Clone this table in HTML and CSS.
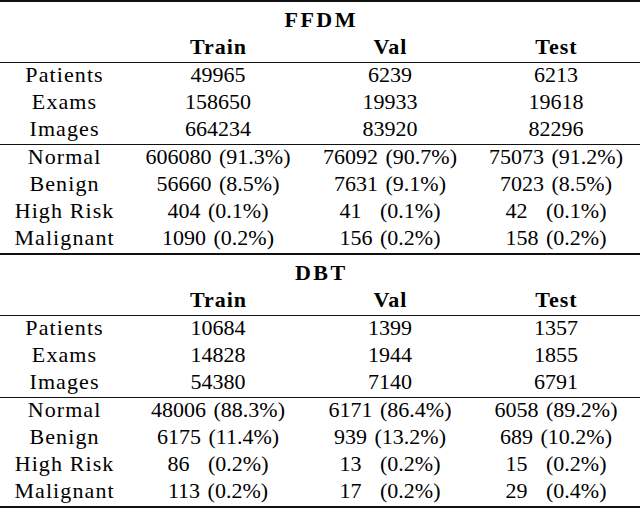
FILE: index.html
```html
<!DOCTYPE html>
<html lang="en">
<head>
<meta charset="utf-8">
<title>Dataset statistics</title>
<link rel="stylesheet" href="styles.css">
</head>
<body>
<div class="table">
  <div class="rule thick"></div>
  <div class="grid">
    <div class="cell title">FFDM</div>
    <div class="cell"></div><div class="cell head">Train</div><div class="cell head">Val</div><div class="cell head">Test</div>
    <div class="rule thin"></div>
    <div class="cell label">Patients</div><div class="cell">49965</div><div class="cell">6239</div><div class="cell">6213</div>
    <div class="cell label">Exams</div><div class="cell">158650</div><div class="cell">19933</div><div class="cell">19618</div>
    <div class="cell label">Images</div><div class="cell">664234</div><div class="cell">83920</div><div class="cell">82296</div>
    <div class="rule thin"></div>
    <div class="cell label">Normal</div><div class="cell">606080 (91.3%)</div><div class="cell">76092 (90.7%)</div><div class="cell">75073 (91.2%)</div>
    <div class="cell label">Benign</div><div class="cell">56660 (8.5%)</div><div class="cell">7631 (9.1%)</div><div class="cell">7023 (8.5%)</div>
    <div class="cell label">High Risk</div><div class="cell">404 (0.1%)</div><div class="cell">41<span class="ph"></span> (0.1%)</div><div class="cell">42<span class="ph"></span> (0.1%)</div>
    <div class="cell label">Malignant</div><div class="cell">1090 (0.2%)</div><div class="cell">156 (0.2%)</div><div class="cell">158 (0.2%)</div>
  </div>
  <div class="rule thick"></div>
  <div class="grid">
    <div class="cell title">DBT</div>
    <div class="cell"></div><div class="cell head">Train</div><div class="cell head">Val</div><div class="cell head">Test</div>
    <div class="rule thin"></div>
    <div class="cell label">Patients</div><div class="cell">10684</div><div class="cell">1399</div><div class="cell">1357</div>
    <div class="cell label">Exams</div><div class="cell">14828</div><div class="cell">1944</div><div class="cell">1855</div>
    <div class="cell label">Images</div><div class="cell">54380</div><div class="cell">7140</div><div class="cell">6791</div>
    <div class="rule thin"></div>
    <div class="cell label">Normal</div><div class="cell">48006 (88.3%)</div><div class="cell">6171 (86.4%)</div><div class="cell">6058 (89.2%)</div>
    <div class="cell label">Benign</div><div class="cell">6175 (11.4%)</div><div class="cell">939 (13.2%)</div><div class="cell">689 (10.2%)</div>
    <div class="cell label">High Risk</div><div class="cell">86<span class="ph"></span> (0.2%)</div><div class="cell">13<span class="ph"></span> (0.2%)</div><div class="cell">15<span class="ph"></span> (0.2%)</div>
    <div class="cell label">Malignant</div><div class="cell">113 (0.2%)</div><div class="cell">17<span class="ph"></span> (0.2%)</div><div class="cell">29<span class="ph"></span> (0.4%)</div>
  </div>
  <div class="rule thick"></div>
</div>
</body>
</html>
```

FILE: styles.css
```css
html, body {
  margin: 0;
  padding: 0;
  background: #ffffff;
}

body {
  font-family: "Liberation Serif", "Times New Roman", "DejaVu Serif", serif;
  font-size: 22px;
  color: #000000;
}

.table {
  width: 640px;
}

.grid {
  display: grid;
  grid-template-columns: 128px 180px 164px 168px;
}

.cell {
  height: 27px;
  line-height: 23px;
  text-align: center;
  white-space: nowrap;
  word-spacing: 2px;
}

.title {
  grid-column: 1 / -1;
  height: 27px;
  padding-top: 6px;
  font-weight: bold;
  letter-spacing: 2.5px;
  text-indent: 2.5px;
}

.head {
  font-weight: bold;
  letter-spacing: 1px;
  text-indent: 1px;
}

.label {
  letter-spacing: 1.1px;
  text-indent: 1.1px;
  word-spacing: 0;
}

.ph {
  display: inline-block;
  width: 0.5em;
}

.rule {
  grid-column: 1 / -1;
  background: #111111;
}

.rule.thin {
  height: 1px;
}

.rule.thick {
  height: 2px;
}
```
